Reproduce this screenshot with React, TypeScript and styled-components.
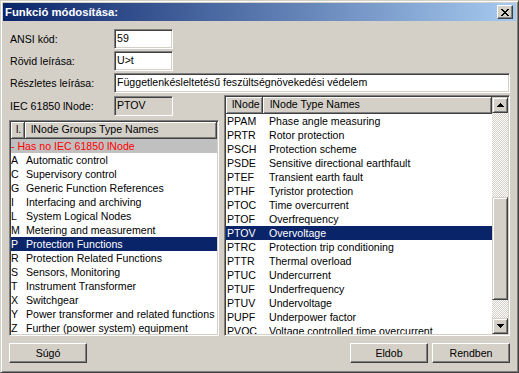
import React from 'react';
import styled, { createGlobalStyle, css } from 'styled-components';

const Global = createGlobalStyle`
  html, body { margin: 0; padding: 0; background: #d4d0c8; }
  body { font-family: "Liberation Sans", Arial, sans-serif; font-size: 10.6px; color: #000; }
  * { box-sizing: border-box; }
`;

const sunken = css`
  border: 1px solid;
  border-color: #808080 #ffffff #ffffff #808080;
  box-shadow: inset 1px 1px #404040, inset -1px -1px #d4d0c8;
`;

const raised = css`
  background: #d4d0c8;
  border: 1px solid;
  border-color: #d4d0c8 #404040 #404040 #d4d0c8;
  box-shadow: inset 1px 1px #ffffff, inset -1px -1px #808080;
`;

const Frame = styled.div`
  width: 519px;
  height: 373px;
  display: flex;
  flex-direction: column;
  background: #d4d0c8;
  border: 1px solid;
  border-color: #d4d0c8 #404040 #404040 #d4d0c8;
  box-shadow: inset 1px 1px #ffffff, inset -1px -1px #808080;
  padding: 2px;
  overflow: hidden;
`;

const TitleBar = styled.div`
  height: 18px;
  flex: none;
  display: flex;
  align-items: center;
  justify-content: space-between;
  padding: 0 3px 0 2px;
  background: linear-gradient(to right, #0a246a, #a6caf0);
  color: #ffffff;
  font-weight: bold;
  font-size: 11.3px;
  white-space: nowrap;
`;

const CloseButton = styled.div`
  width: 16px;
  height: 14px;
  background: #d4d0c8;
  border: 1px solid;
  border-color: #ffffff #404040 #404040 #ffffff;
  box-shadow: inset -1px -1px #808080;
  display: flex;
  align-items: center;
  justify-content: center;
  padding-right: 1px;
`;

const Body = styled.div`
  flex: 1;
  min-height: 0;
  display: flex;
  flex-direction: column;
  padding: 8px 6px 7px 6px;
`;

const FieldRow = styled.div`
  display: flex;
  align-items: center;
  height: 20px;
  margin-bottom: 2px;
  flex: none;
`;

const Label = styled.div`
  width: 105px;
  padding-left: 1px;
  white-space: nowrap;
  flex: none;
`;

const TextBox = styled.div<{ $w?: number; $disabled?: boolean }>`
  ${sunken};
  height: 20px;
  width: ${(p) => (p.$w ? `${p.$w}px` : 'auto')};
  flex: ${(p) => (p.$w ? 'none' : '1')};
  background: ${(p) => (p.$disabled ? '#d4d0c8' : '#ffffff')};
  padding: 0 2px;
  line-height: 17px;
  white-space: nowrap;
  overflow: hidden;
`;

const Main = styled.div`
  flex: 1;
  min-height: 0;
  display: flex;
  gap: 5px;
`;

const LeftColumn = styled.div`
  width: 210px;
  flex: none;
  display: flex;
  flex-direction: column;
`;

const IecRow = styled(FieldRow)`
  height: 19px;
  margin: 1px 0 5px 0;
`;

const ListBox = styled.div<{ $flex?: boolean }>`
  ${sunken};
  background: #ffffff;
  padding: 1px;
  flex: 1;
  min-height: 0;
  min-width: 0;
  overflow: hidden;
  display: flex;
  flex-direction: ${(p) => (p.$flex ? 'row' : 'column')};
`;

const ListContent = styled.div`
  flex: 1;
  min-width: 0;
  display: flex;
  flex-direction: column;
  overflow: hidden;
`;

const HeaderRow = styled.div`
  display: flex;
  height: 17px;
  flex: none;
`;

const HeaderCell = styled.div<{ $w?: number; $pad: number }>`
  background: #d4d0c8;
  border-right: 1px solid #404040;
  border-bottom: 1px solid #404040;
  box-shadow: inset 1px 1px #ffffff, inset -1px -1px #808080;
  width: ${(p) => (p.$w ? `${p.$w}px` : 'auto')};
  flex: ${(p) => (p.$w ? 'none' : '1')};
  padding-left: ${(p) => p.$pad}px;
  line-height: 15px;
  white-space: nowrap;
  overflow: hidden;
`;

const Row = styled.div<{ $selected?: boolean; $special?: boolean }>`
  display: flex;
  height: 14px;
  line-height: 14px;
  flex: none;
  white-space: nowrap;
  background: ${(p) => (p.$selected ? '#0a246a' : p.$special ? '#c0c0c0' : 'transparent')};
  color: ${(p) => (p.$selected ? '#ffffff' : p.$special ? '#ff0000' : '#000000')};
`;

const CodeCell = styled.div<{ $w: number; $pad: number }>`
  width: ${(p) => p.$w}px;
  padding-left: ${(p) => p.$pad}px;
  flex: none;
  overflow: hidden;
`;

const NameCell = styled.div`
  flex: 1;
  overflow: hidden;
`;

const ScrollBar = styled.div`
  width: 16px;
  flex: none;
  display: flex;
  flex-direction: column;
`;

const ScrollButton = styled.div`
  ${raised};
  width: 16px;
  height: 16px;
  flex: none;
  display: flex;
  align-items: center;
  justify-content: center;
`;

const Track = styled.div`
  flex: 1;
  min-height: 0;
  background-color: #d4d0c8;
  background-image: conic-gradient(#ffffff 25%, #d4d0c8 0 50%, #ffffff 0 75%, #d4d0c8 0);
  background-size: 2px 2px;
`;

const Thumb = styled.div<{ $top: number; $h: number }>`
  ${raised};
  height: ${(p) => p.$h}px;
  margin-top: ${(p) => p.$top}px;
`;

const ButtonRow = styled.div`
  display: flex;
  align-items: center;
  gap: 4px;
  margin-top: 7px;
  height: 20px;
  flex: none;
`;

const Spacer = styled.div`
  flex: 1;
`;

const PushButton = styled.div<{ $w: number }>`
  width: ${(p) => p.$w}px;
  height: 20px;
  background: #d4d0c8;
  border: 1px solid;
  border-color: #ffffff #404040 #404040 #ffffff;
  box-shadow: inset -1px -1px #808080;
  display: flex;
  align-items: center;
  justify-content: center;
  padding-bottom: 1px;
`;

const CloseGlyph = () => (
  <svg width="8" height="7" viewBox="0 0 8 7" shapeRendering="crispEdges">
    <path
      fill="#000"
      d="M0 0h2v1H0zM6 0h2v1H6zM1 1h2v1H1zM5 1h2v1H5zM2 2h4v1H2zM3 3h2v1H3zM2 4h4v1H2zM1 5h2v1H1zM5 5h2v1H5zM0 6h2v1H0zM6 6h2v1H6z"
    />
  </svg>
);

const Arrow = ({ down }: { down?: boolean }) => (
  <svg width="7" height="4" viewBox="0 0 7 4" shapeRendering="crispEdges" style={down ? { transform: 'scaleY(-1)' } : undefined}>
    <path fill="#000" d="M3 0h1v1h1v1h1v1h1v1H0V3h1V2h1V1h1z" />
  </svg>
);

const groups: [string, string][] = [
  ['A', 'Automatic control'],
  ['C', 'Supervisory control'],
  ['G', 'Generic Function References'],
  ['I', 'Interfacing and archiving'],
  ['L', 'System Logical Nodes'],
  ['M', 'Metering and measurement'],
  ['P', 'Protection Functions'],
  ['R', 'Protection Related Functions'],
  ['S', 'Sensors, Monitoring'],
  ['T', 'Instrument Transformer'],
  ['X', 'Switchgear'],
  ['Y', 'Power transformer and related functions'],
  ['Z', 'Further (power system) equipment'],
];

const nodes: [string, string][] = [
  ['PPAM', 'Phase angle measuring'],
  ['PRTR', 'Rotor protection'],
  ['PSCH', 'Protection scheme'],
  ['PSDE', 'Sensitive directional earthfault'],
  ['PTEF', 'Transient earth fault'],
  ['PTHF', 'Tyristor protection'],
  ['PTOC', 'Time overcurrent'],
  ['PTOF', 'Overfrequency'],
  ['PTOV', 'Overvoltage'],
  ['PTRC', 'Protection trip conditioning'],
  ['PTTR', 'Thermal overload'],
  ['PTUC', 'Undercurrent'],
  ['PTUF', 'Underfrequency'],
  ['PTUV', 'Undervoltage'],
  ['PUPF', 'Underpower factor'],
  ['PVOC', 'Voltage controlled time overcurrent'],
];

export default function App() {
  return (
    <>
      <Global />
      <Frame>
        <TitleBar>
          <span>Funkció módosítása:</span>
          <CloseButton>
            <CloseGlyph />
          </CloseButton>
        </TitleBar>
        <Body>
          <FieldRow>
            <Label>ANSI kód:</Label>
            <TextBox $w={59}>59</TextBox>
          </FieldRow>
          <FieldRow>
            <Label>Rövid leírása:</Label>
            <TextBox $w={59}>U&gt;t</TextBox>
          </FieldRow>
          <FieldRow>
            <Label>Részletes leírása:</Label>
            <TextBox>Függetlenkésleltetésű feszültségnövekedési védelem</TextBox>
          </FieldRow>
          <Main>
            <LeftColumn>
              <IecRow>
                <Label>IEC 61850 lNode:</Label>
                <TextBox $w={59} $disabled>
                  PTOV
                </TextBox>
              </IecRow>
              <ListBox>
                <HeaderRow>
                  <HeaderCell $w={14} $pad={5}>
                    l.
                  </HeaderCell>
                  <HeaderCell $pad={6}>lNode Groups Type Names</HeaderCell>
                </HeaderRow>
                <Row $special>
                  <NameCell>- Has no IEC 61850 lNode</NameCell>
                </Row>
                {groups.map(([c, n]) => (
                  <Row key={c} $selected={c === 'P'}>
                    <CodeCell $w={15} $pad={0}>
                      {c}
                    </CodeCell>
                    <NameCell>{n}</NameCell>
                  </Row>
                ))}
              </ListBox>
            </LeftColumn>
            <ListBox $flex>
              <ListContent>
                <HeaderRow>
                  <HeaderCell $w={37} $pad={6}>
                    lNode
                  </HeaderCell>
                  <HeaderCell $pad={7}>lNode Type Names</HeaderCell>
                </HeaderRow>
                {nodes.map(([c, n]) => (
                  <Row key={c} $selected={c === 'PTOV'}>
                    <CodeCell $w={43} $pad={1}>
                      {c}
                    </CodeCell>
                    <NameCell>{n}</NameCell>
                  </Row>
                ))}
              </ListContent>
              <ScrollBar>
                <ScrollButton>
                  <Arrow />
                </ScrollButton>
                <Track>
                  <Thumb $top={84} $h={103} />
                </Track>
                <ScrollButton>
                  <Arrow down />
                </ScrollButton>
              </ScrollBar>
            </ListBox>
          </Main>
          <ButtonRow>
            <PushButton $w={78}>Súgó</PushButton>
            <Spacer />
            <PushButton $w={78}>Eldob</PushButton>
            <PushButton $w={78}>Rendben</PushButton>
          </ButtonRow>
        </Body>
      </Frame>
    </>
  );
}
